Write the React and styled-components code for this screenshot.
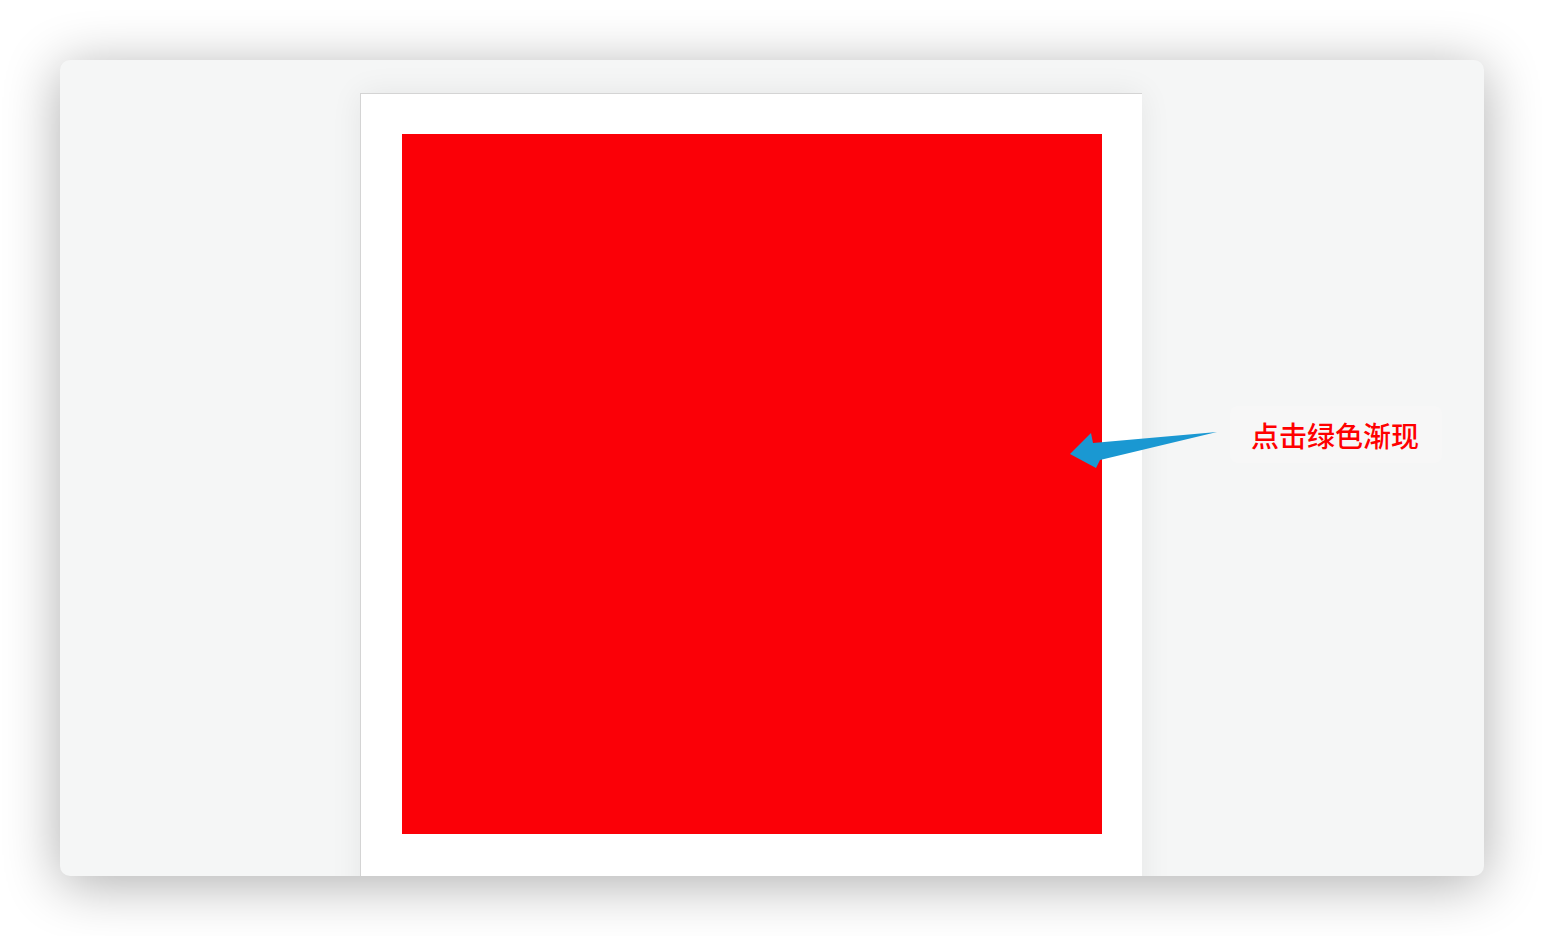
import React from 'react'
import styled, { createGlobalStyle } from 'styled-components'

const GlobalStyle = createGlobalStyle`
    html, body {
        margin: 0;
        padding: 0;
        background: #ffffff;
        font-family: "Noto Sans CJK SC", "Noto Sans", sans-serif;
    }
`

const Page = styled.div`
    box-sizing: border-box;
    width: 1544px;
    height: 936px;
    padding: 60px;
    overflow: hidden;
`

const Window = styled.div`
    position: relative;
    box-sizing: border-box;
    width: 1424px;
    height: 816px;
    padding: 33px 0px 0px 300px;
    display: flex;
    align-items: flex-start;
    background: #f5f6f6;
    border-radius: 10px;
    overflow: hidden;
    box-shadow: 0px 8px 55px rgba(0, 0, 0, 0.32);
`

const Sheet = styled.div`
    box-sizing: border-box;
    width: 782px;
    height: 900px;
    padding: 40px 40px 40px 41px;
    background: #ffffff;
    border-top: 1px solid #d4d4d4;
    border-left: 1px solid #d4d4d4;
    box-shadow: 0px 0px 30px rgba(0, 0, 0, 0.07);
`

const Square = styled.div`
    width: 700px;
    height: 700px;
    background: ${props => props.color};
`

// callout lies over the sheet edge
const Callout = styled.div`
    position: absolute;
    left: 1008px;
    top: 346px;
    display: flex;
    align-items: flex-start;
`

const Arrow = styled.svg`
    display: block;
    margin-top: 24px;
`

const Label = styled.div`
    box-sizing: border-box;
    margin-left: 12px;
    padding-left: 21px;
    width: 212px;
    height: 57px;
    display: flex;
    align-items: center;
    background: #f7f7f7;
    border-radius: 8px;
    color: #ff0000;
    font-size: 28px;
    font-weight: 500;
    line-height: 1;
    white-space: nowrap;
`

export default function App() {
    return (
        <>
            <GlobalStyle />
            <Page>
                <Window>
                    <Sheet>
                        <Square color={'#fb0007'} />
                    </Sheet>
                    <Callout>
                        <Arrow width="150" height="40" viewBox="1068 430 150 40">
                            <polygon
                                points="1070,454 1091,433 1093,443 1217,432 1100,460 1096,468"
                                fill="#1a98d2"
                            />
                        </Arrow>
                        <Label>点击绿色渐现</Label>
                    </Callout>
                </Window>
            </Page>
        </>
    )
}
